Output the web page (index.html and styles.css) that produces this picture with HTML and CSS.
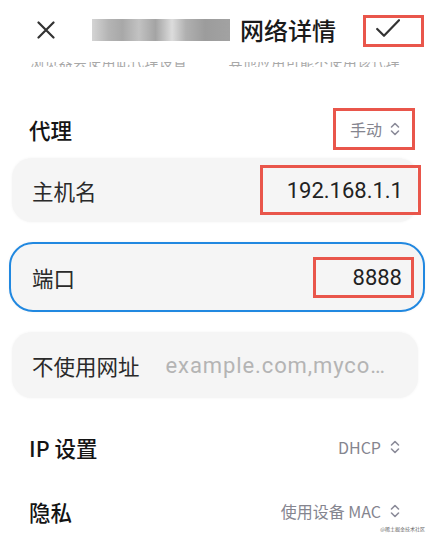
FILE: index.html
```html
<!DOCTYPE html>
<html lang="zh">
<head>
<meta charset="utf-8">
<title>网络详情</title>
<link rel="stylesheet" href="styles.css">
</head>
<body>
<div class="screen">
  <header class="topbar">
    <svg class="icon-close" width="18" height="18" viewBox="0 0 18 18"><path d="M1.5 1.5 L16.5 16.5 M16.5 1.5 L1.5 16.5" stroke="#333" stroke-width="2.2" stroke-linecap="round" fill="none"/></svg>
    <div class="blurred"></div>
    <h1 class="title">网络详情</h1>
    <div class="mark mark-check">
      <svg width="24" height="18" viewBox="0 0 24 18"><path d="M1.2 10 L8 16.8 L23 1.2" stroke="#333" stroke-width="2.2" stroke-linecap="round" stroke-linejoin="round" fill="none"/></svg>
    </div>
  </header>

  <div class="fade-row">
    <span>浏览器会使用此代理设置</span>
    <span>其他应用可能不使用该代理</span>
  </div>

  <div class="row row-proxy">
    <span class="label">代理</span>
    <span class="mark mark-select">
      <span class="select-text">手动</span>
      <svg class="chev" width="10" height="14" viewBox="0 0 10 14"><path d="M1.5 5 L5 1.5 L8.5 5 M1.5 9 L5 12.5 L8.5 9" stroke="#8b8b99" stroke-width="1.6" stroke-linecap="round" stroke-linejoin="round" fill="none"/></svg>
    </span>
  </div>

  <div class="card card-host">
    <span class="card-label">主机名</span>
    <span class="mark mark-host"><span class="value">192.168.1.1</span></span>
  </div>

  <div class="card card-port">
    <span class="card-label">端口</span>
    <span class="mark mark-port"><span class="value">8888</span></span>
  </div>

  <div class="card card-bypass">
    <span class="card-label">不使用网址</span>
    <span class="placeholder">example.com,mycompany.com,localhost</span>
  </div>

  <div class="row row-ip">
    <span class="label">IP 设置</span>
    <span class="select">
      <span class="select-text">DHCP</span>
      <svg class="chev" width="10" height="14" viewBox="0 0 10 14"><path d="M1.5 5 L5 1.5 L8.5 5 M1.5 9 L5 12.5 L8.5 9" stroke="#8b8b99" stroke-width="1.6" stroke-linecap="round" stroke-linejoin="round" fill="none"/></svg>
    </span>
  </div>

  <div class="row row-privacy">
    <span class="label">隐私</span>
    <span class="select">
      <span class="select-text">使用设备 MAC</span>
      <svg class="chev" width="10" height="14" viewBox="0 0 10 14"><path d="M1.5 5 L5 1.5 L8.5 5 M1.5 9 L5 12.5 L8.5 9" stroke="#8b8b99" stroke-width="1.6" stroke-linecap="round" stroke-linejoin="round" fill="none"/></svg>
    </span>
  </div>

  <div class="watermark">@稀土掘金技术社区</div>
</div>
</body>
</html>
```

FILE: styles.css
```css
* { box-sizing: border-box; }

html, body {
  margin: 0;
  padding: 0;
  background: #ffffff;
}

body {
  font-family: "Noto Sans CJK SC", "Noto Sans", sans-serif;
  color: #222;
}

.screen {
  position: relative;
  width: 436px;
  height: 542px;
  overflow: hidden;
}

.mark {
  border: 3px solid #e9564b;
}

/* header */
.topbar {
  height: 60px;
  display: flex;
  align-items: center;
  padding-left: 37px;
}

.icon-close { flex: none; }

.blurred {
  width: 138px;
  height: 22px;
  margin-left: 37px;
  background: linear-gradient(90deg, #d4d4d4 0%, #b4b4b4 12%, #a8a8a8 22%, #c2c2c2 34%, #a4a4a4 46%, #dcdcdc 58%, #b0b0b0 68%, #9c9c9c 82%, #a2a2a2 100%);
  filter: blur(0.6px);
}

.title {
  margin: 0 0 0 10px;
  font-size: 24px;
  font-weight: 500;
  line-height: 1;
  color: #1a1a1a;
}

.mark-check {
  width: 61px;
  height: 32px;
  margin-left: 27px;
  margin-top: 2px;
  display: flex;
  align-items: flex-start;
  padding: 1px 0 0 10px;
}

/* faded partial row: the bottom edge of a row scrolled under the header */
.fade-row {
  height: 8px;
  padding-top: 2px;
  display: flex;
  justify-content: space-between;
  padding-left: 30px;
  padding-right: 36px;
  overflow: hidden;
}

.fade-row span {
  flex: none;
  display: flex;
  align-items: flex-end;
  height: 5px;
  overflow: hidden;
  white-space: nowrap;
  font-size: 14px;
  line-height: 12px;
  color: #a8a8a8;
  letter-spacing: 0.3px;
}

/* plain rows */
.row {
  display: flex;
  align-items: center;
  justify-content: space-between;
  padding-left: 29px;
}

.label {
  font-size: 21.5px;
  font-weight: 500;
  color: #141414;
}

.row-proxy {
  height: 42px;
  margin-top: 40px;
  padding-right: 21px;
}

.mark-select {
  width: 82px;
  height: 42px;
  display: flex;
  align-items: center;
  justify-content: flex-end;
  padding-right: 12px;
  gap: 8px;
}

.select {
  display: flex;
  align-items: center;
  gap: 9px;
}

.select-text {
  font-size: 16px;
  color: #85858f;
}

.chev { flex: none; }

.row-ip {
  height: 50px;
  margin-top: 24px;
  padding-right: 36px;
}

.row-privacy {
  height: 50px;
  margin-top: 14px;
  padding-right: 36px;
}

/* cards */
.card {
  display: flex;
  align-items: center;
  justify-content: space-between;
  background: #f5f5f5;
  border-radius: 20px;
  box-shadow: 0 0 3px rgba(0, 0, 0, 0.05);
}

.card-label {
  flex: none;
  font-size: 21.5px;
  color: #2a2a2a;
}

.value {
  font-family: "Roboto", "Noto Sans", sans-serif;
  font-size: 22px;
  color: #222;
}

.card-host {
  margin: 8px 0 0 12px;
  width: 406px;
  height: 64px;
  padding-left: 20px;
  padding-right: 0;
}

.mark-host {
  width: 161px;
  height: 50px;
  margin-right: -3px;
  display: flex;
  align-items: center;
  justify-content: flex-end;
  padding-right: 15px;
}

.card-port {
  margin: 20px 0 0 9px;
  width: 416px;
  height: 70px;
  border: 2px solid #2188e0;
  border-radius: 24px;
  padding-left: 21px;
  padding-right: 9px;
}

.mark-port {
  width: 101px;
  height: 41px;
  display: flex;
  align-items: center;
  justify-content: flex-end;
  padding-right: 9px;
}

.card-bypass {
  margin: 20px 0 0 12px;
  width: 406px;
  height: 66px;
  padding-left: 20px;
  padding-right: 15px;
}

.placeholder {
  flex: 1;
  min-width: 0;
  margin-left: 26px;
  font-family: "Roboto", "Noto Sans", sans-serif;
  font-size: 22px;
  letter-spacing: 0.9px;
  color: #b4b4b4;
  white-space: nowrap;
  overflow: hidden;
  text-overflow: ellipsis;
}

.watermark {
  position: absolute;
  right: 11px;
  bottom: 11px;
  font-size: 5px;
  line-height: 5px;
  color: #666;
}
```
